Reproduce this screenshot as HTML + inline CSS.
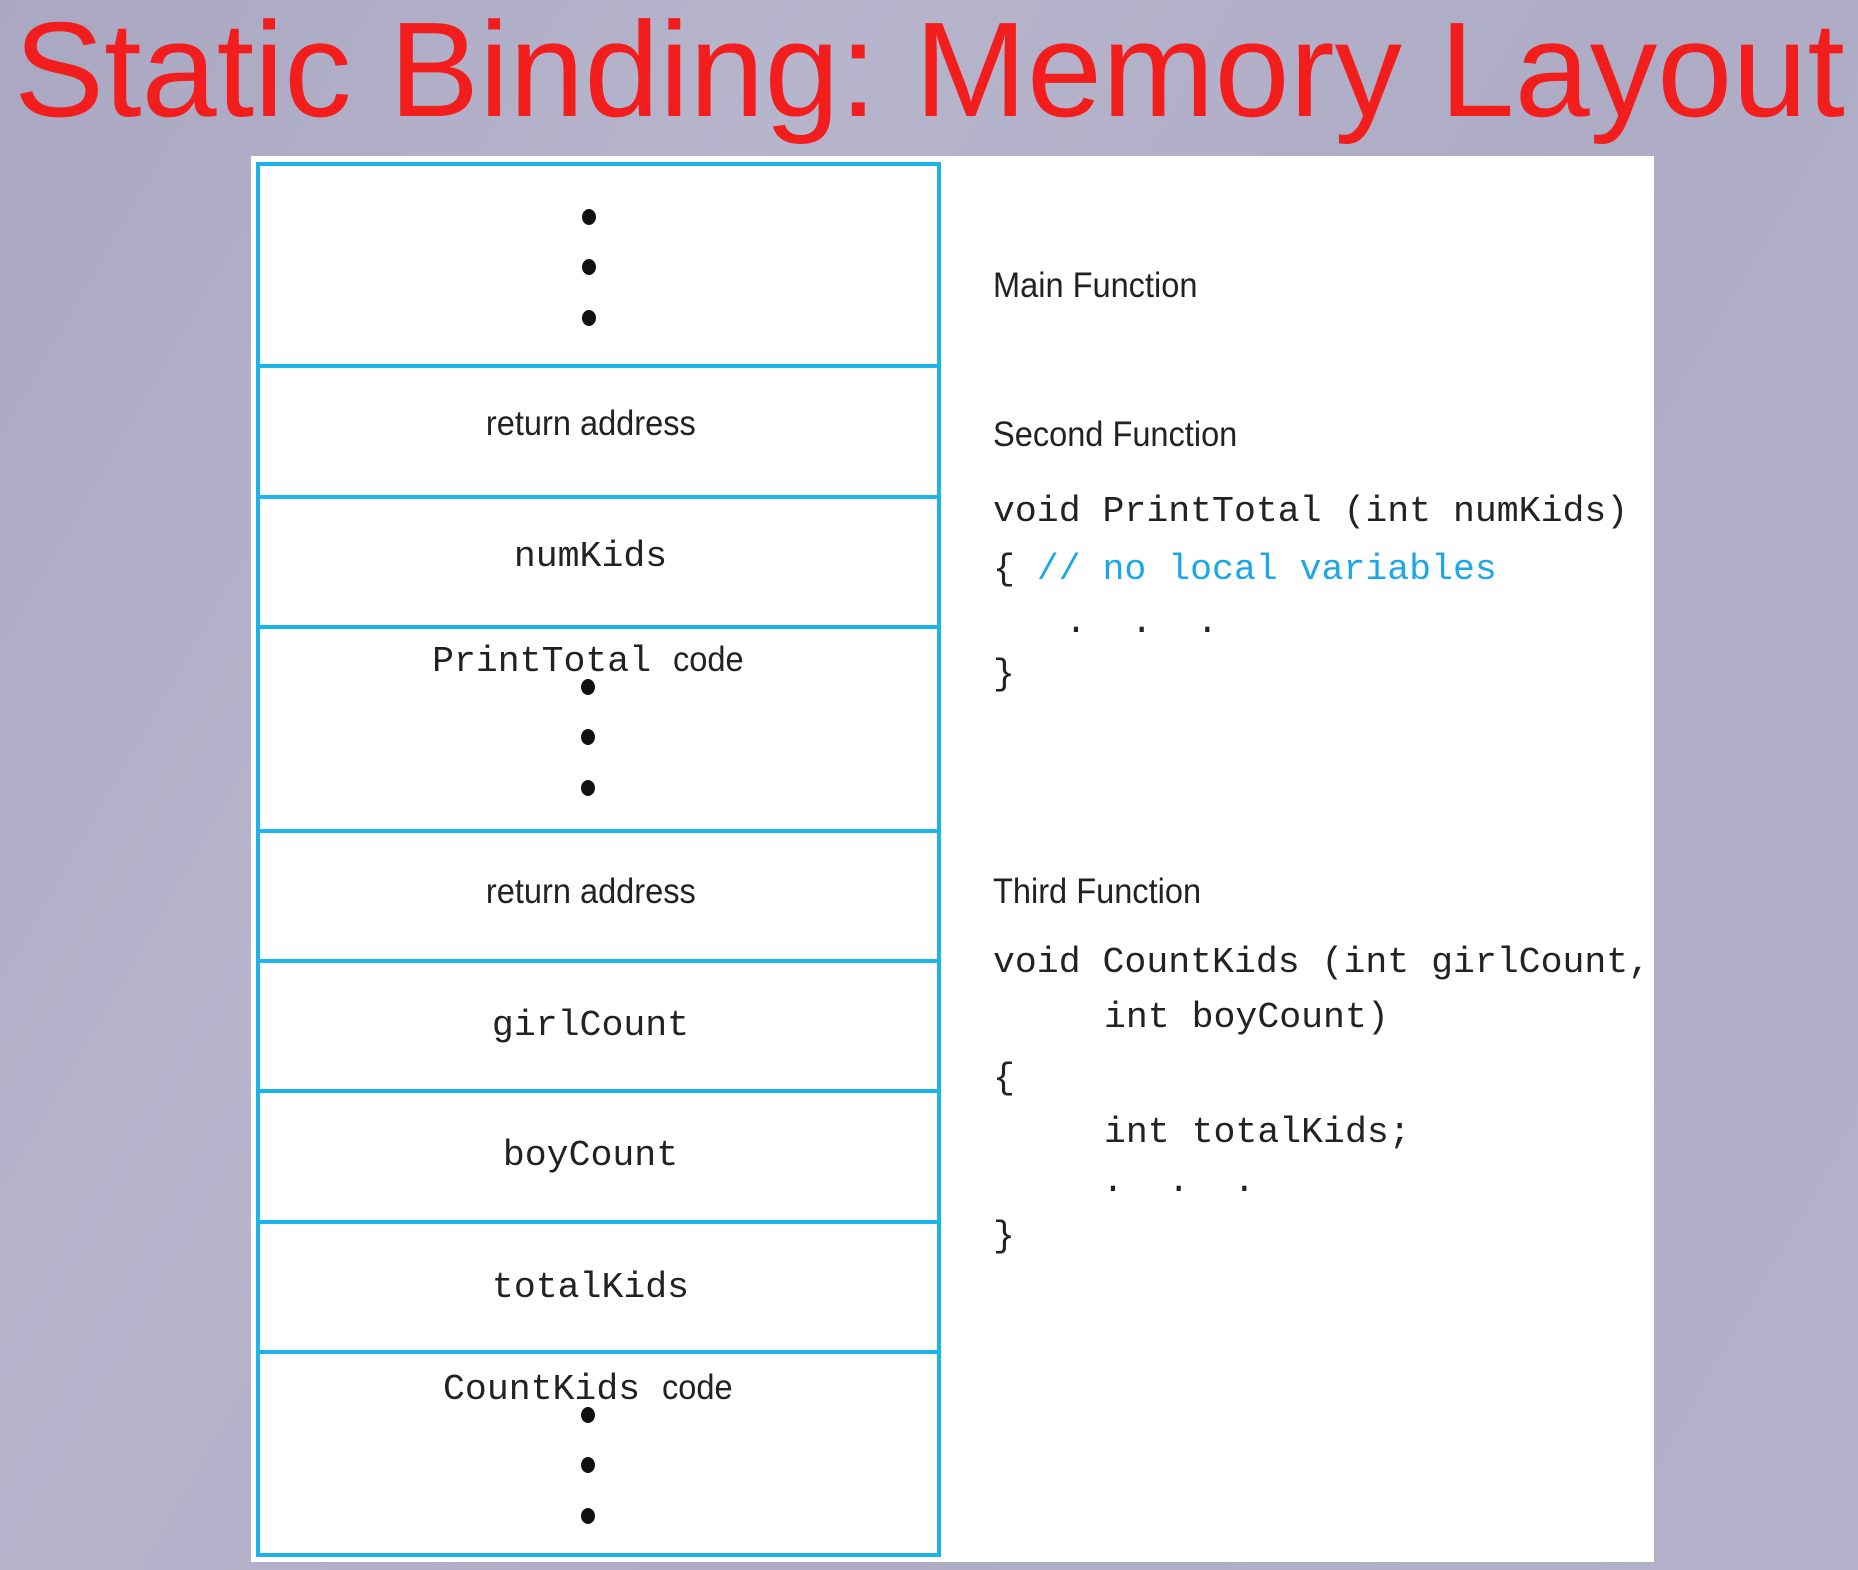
<!DOCTYPE html>
<html><head><meta charset="utf-8"><style>
body{margin:0;width:1858px;height:1570px;overflow:hidden;position:relative;background:linear-gradient(120deg,#a9a7c1 0%,#b7b5cc 30%,#aeacc5 60%,#b4b2ca 100%);font-family:"Liberation Sans",sans-serif}
.t{position:absolute;white-space:pre;line-height:40px;height:40px}
.title{position:absolute;left:14px;top:2px;font-size:135px;line-height:135px;color:#f21d1d;white-space:nowrap}
.panel{position:absolute;left:251px;top:156px;width:1403px;height:1406px;background:#fff}
.h{position:absolute;left:256px;width:685px;height:4px;background:#1cb4ea}
.v{position:absolute;top:162px;width:4px;height:1395px;background:#1cb4ea}
.d{position:absolute;width:14px;height:16px;border-radius:50%;background:#111}
.s{font-family:"Liberation Sans",sans-serif;font-size:35px;color:#222;transform:scaleX(.93);transform-origin:left center}
.m{font-family:"Liberation Mono",monospace;font-size:36.5px;color:#222}
.c{width:685px;left:248px;text-align:center}
</style></head><body>
<div class="title">Static Binding: Memory Layout</div>
<div class="panel"></div>
<div class="h" style="top:162px"></div>
<div class="h" style="top:364px"></div>
<div class="h" style="top:495px"></div>
<div class="h" style="top:625px"></div>
<div class="h" style="top:829px"></div>
<div class="h" style="top:959px"></div>
<div class="h" style="top:1089px"></div>
<div class="h" style="top:1220px"></div>
<div class="h" style="top:1350px"></div>
<div class="h" style="top:1553px"></div>
<div class="v" style="left:256px"></div>
<div class="v" style="left:937px"></div>

<div class="d" style="left:582px;top:209px"></div>
<div class="d" style="left:582px;top:259px"></div>
<div class="d" style="left:582px;top:310px"></div>
<div class="d" style="left:581px;top:679px"></div>
<div class="d" style="left:581px;top:729px"></div>
<div class="d" style="left:581px;top:780px"></div>
<div class="d" style="left:581px;top:1407px"></div>
<div class="d" style="left:581px;top:1457px"></div>
<div class="d" style="left:581px;top:1508px"></div>

<div class="t c" style="top:404px"><span class="s" style="display:inline-block;transform-origin:center">return address</span></div>
<div class="t c m" style="top:537px">numKids</div>
<div class="t c" style="top:640px"><span class="m">PrintTotal </span><span class="s" style="display:inline-block;transform-origin:left center">code</span></div>
<div class="t c" style="top:872px"><span class="s" style="display:inline-block;transform-origin:center">return address</span></div>
<div class="t c m" style="top:1006px">girlCount</div>
<div class="t c m" style="top:1136px">boyCount</div>
<div class="t c m" style="top:1268px">totalKids</div>
<div class="t c" style="top:1368px"><span class="m">CountKids </span><span class="s" style="display:inline-block;transform-origin:left center">code</span></div>

<div class="t s" style="left:993px;top:266px">Main Function</div>
<div class="t s" style="left:993px;top:415px">Second Function</div>
<div class="t m" style="left:993px;top:492px">void PrintTotal (int numKids)</div>
<div class="t m" style="left:993px;top:550px">{ <span style="color:#1ca8e8">// no local variables</span></div>
<div class="t m" style="left:1065px;top:603px">.  .  .</div>
<div class="t m" style="left:993px;top:655px">}</div>
<div class="t s" style="left:993px;top:872px">Third Function</div>
<div class="t m" style="left:993px;top:943px">void CountKids (int girlCount,</div>
<div class="t m" style="left:1104px;top:998px">int boyCount)</div>
<div class="t m" style="left:993px;top:1059px">{</div>
<div class="t m" style="left:1104px;top:1113px">int totalKids;</div>
<div class="t m" style="left:1102px;top:1162px">.  .  .</div>
<div class="t m" style="left:993px;top:1217px">}</div>
</body></html>
